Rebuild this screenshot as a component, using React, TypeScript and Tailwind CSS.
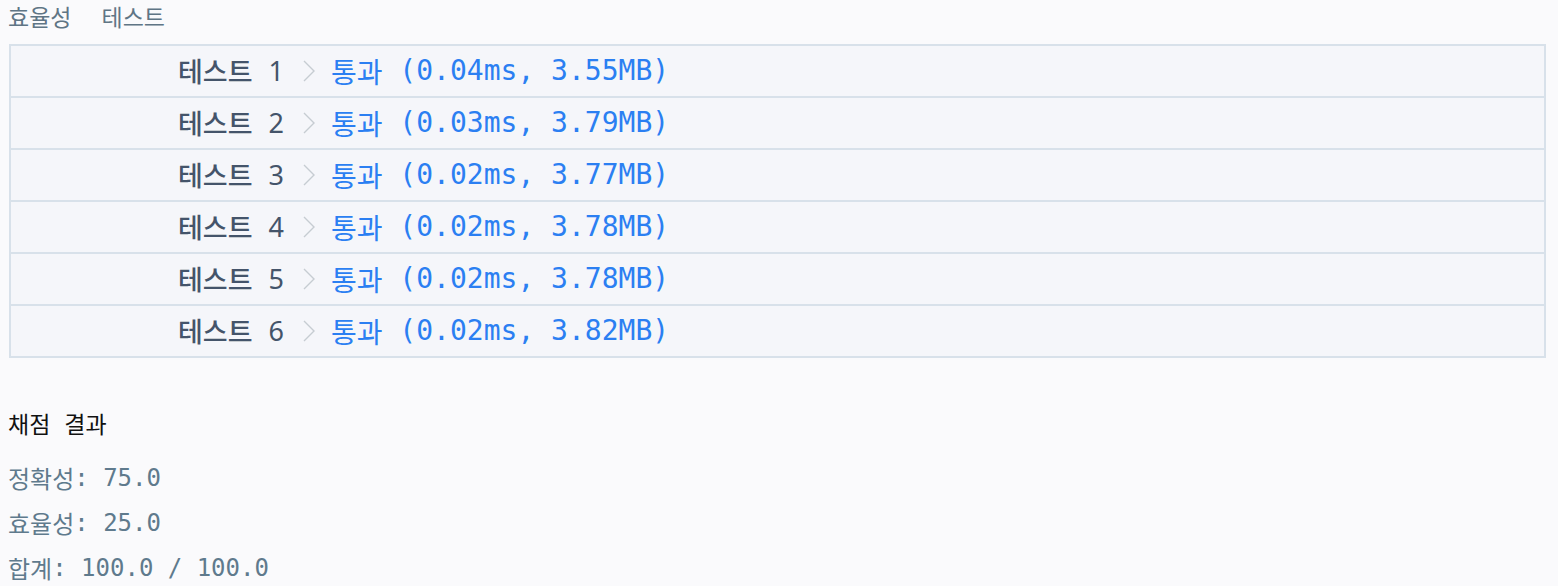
const results = [
  { id: 1, time: '0.04ms', mem: '3.55MB' },
  { id: 2, time: '0.03ms', mem: '3.79MB' },
  { id: 3, time: '0.02ms', mem: '3.77MB' },
  { id: 4, time: '0.02ms', mem: '3.78MB' },
  { id: 5, time: '0.02ms', mem: '3.78MB' },
  { id: 6, time: '0.02ms', mem: '3.82MB' },
];

const kr = "font-['Noto_Sans_CJK_KR',sans-serif]";
const mono = "font-['DejaVu_Sans_Mono','Noto_Sans_CJK_KR',monospace]";

function Chevron() {
  return (
    <svg width="12" height="22" viewBox="0 0 12 22" className="ml-[19px] mr-[16px] shrink-0">
      <polyline points="1,1 11,11 1,21" fill="none" stroke="#c6ccd2" strokeWidth="1.4" />
    </svg>
  );
}

function ScoreLine({ label, value }: { label: string; value: string }) {
  return (
    <div className="h-[45px] flex items-center pl-2 text-[#5f7a8d]">
      <span className={`${kr} text-[24px]`}>{label}</span>
      <span className={`${mono} text-[24px]`}>: {value}</span>
    </div>
  );
}

export default function App() {
  return (
    <div className="min-h-screen bg-[#fafafc]">
      <div className={`h-8 flex items-center pl-2 gap-[30px] text-[23px] text-[#5f7585] ${kr}`}>
        <span>효율성</span>
        <span>테스트</span>
      </div>
      <div className="mt-3 ml-[9px] mr-[12px] border-2 border-[#d8e1ea] bg-[#f5f6fa] divide-y-2 divide-[#d8e1ea]">
        {results.map((r) => (
          <div key={r.id} className="box-content h-[50px] flex items-center pl-[167px]">
            <span className={`${kr} text-[27px] font-medium text-[#44546a]`}>테스트</span>
            <span className="font-['Noto_Sans',sans-serif] text-[27px] text-[#44546a] ml-[16px]">
              {r.id}
            </span>
            <Chevron />
            <span className={`${kr} text-[28px] text-[#2b7ff2]`}>통과</span>
            <span className={`${mono} text-[28px] text-[#2b7ff2] whitespace-pre`}>
              {` (${r.time}, ${r.mem})`}
            </span>
          </div>
        ))}
      </div>
      <div className={`mt-[49px] h-8 flex items-center gap-[14px] pl-2 text-[23px] text-[#111] ${kr}`}>
        <span>채점</span>
        <span>결과</span>
      </div>
      <div className="mt-[16px]">
        <ScoreLine label="정확성" value="75.0" />
        <ScoreLine label="효율성" value="25.0" />
        <ScoreLine label="합계" value="100.0 / 100.0" />
      </div>
    </div>
  );
}
